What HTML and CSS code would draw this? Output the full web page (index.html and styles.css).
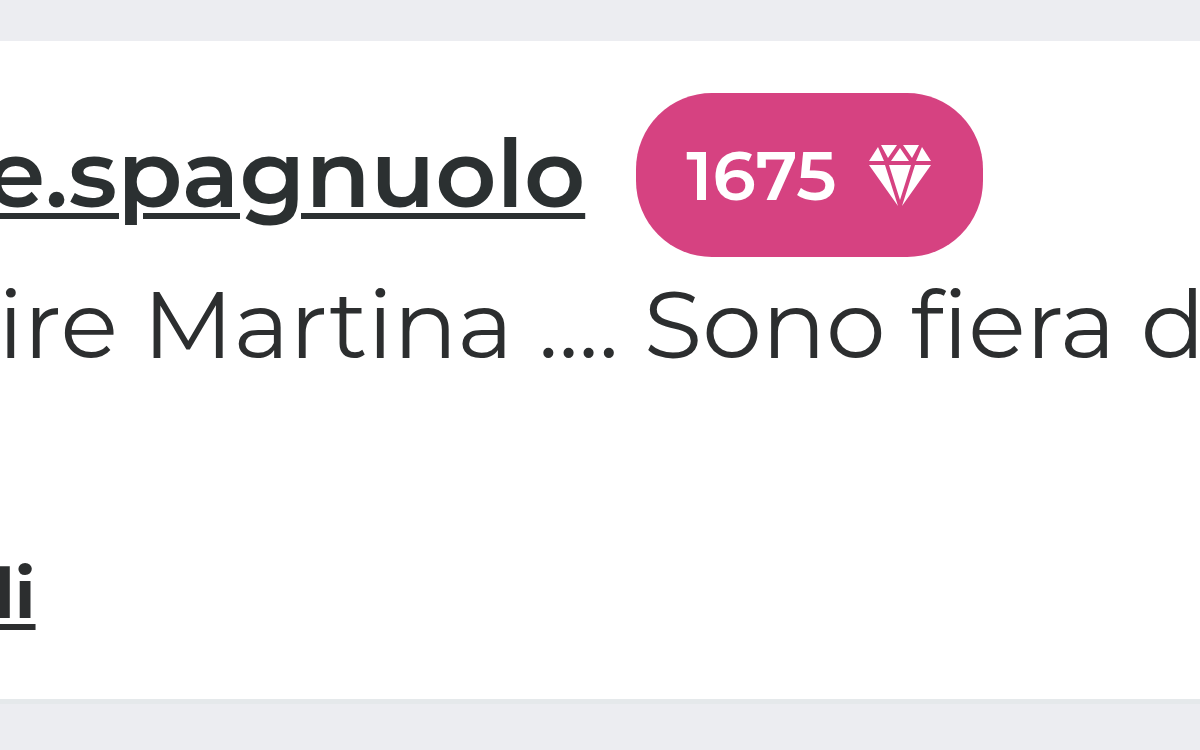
FILE: index.html
```
<!DOCTYPE html>
<html lang="it">
<head>
    <meta charset="UTF-8" />
    <meta name="viewport" content="width=device-width, initial-scale=1.0"/>
    <title>Commenti</title>
    <link rel="stylesheet" href="styles.css">
</head>
<body>

<article class="comment">
    <header class="comment-header">
        <a class="username" href="#">e.spagnuolo</a>
        <span class="badge">
            1675
            <svg class="badge-icon" viewBox="0 0 64 64" aria-hidden="true">
                <path d="M9 4 L15 18 H0 Z M12 2 H28 L19 15 Z M34 2 H50 L43 15 Z M31 5 L40 18 H22 Z M53 4 L62 18 H47 Z M0 22 H16 L29 63 Z M20 22 H42 L31 57 Z M46 22 H62 L33 63 Z"/>
            </svg>
        </span>
    </header>
    <p class="comment-text">ire Martina .... Sono fiera d</p>
    <footer class="comment-footer">
        <a class="reply-link" href="#">di</a>
    </footer>
</article>

</body>
</html>
```
FILE: styles.css
```
* {
    box-sizing: border-box;
}

body {
    margin: 0;
    padding: 41px 0;
    background-color: #ecedf1;
    color: #2c2e2f;
    font-family: Montserrat, Inter, sans-serif;
    overflow: hidden;
}

.comment {
    background-color: #ffffff;
    padding: 52px 0 62px;
    overflow: hidden;
    box-shadow: 0 5px 0 #e5e9eb;
}

.comment-header {
    display: flex;
    align-items: center;
    gap: 51px;
    margin-left: -14px;
}

.username {
    padding-bottom: 4px;
    color: #2b3031;
    font-size: 95px;
    font-weight: 600;
    line-height: 108px;
    text-decoration-thickness: 6px;
    text-underline-offset: 6px;
}

.badge {
    display: flex;
    align-items: center;
    gap: 33px;
    padding: 40px 50px;
    border-radius: 76px;
    background-color: #d64281;
    color: #ffffff;
    font-size: 69px;
    font-weight: 600;
    line-height: 84px;
}

.badge-icon {
    width: 64px;
    height: 64px;
    fill: #ffffff;
}

.comment-text {
    margin: 12px 0 0 -2px;
    font-size: 95px;
    font-weight: 400;
    line-height: 110px;
    white-space: nowrap;
}

.comment-footer {
    margin-left: -33px;
    padding-top: 170px;
}

.reply-link {
    color: #2c2e2f;
    font-size: 69px;
    font-weight: 700;
    line-height: 88px;
    text-decoration-thickness: 6px;
    text-underline-offset: 6px;
}
```
